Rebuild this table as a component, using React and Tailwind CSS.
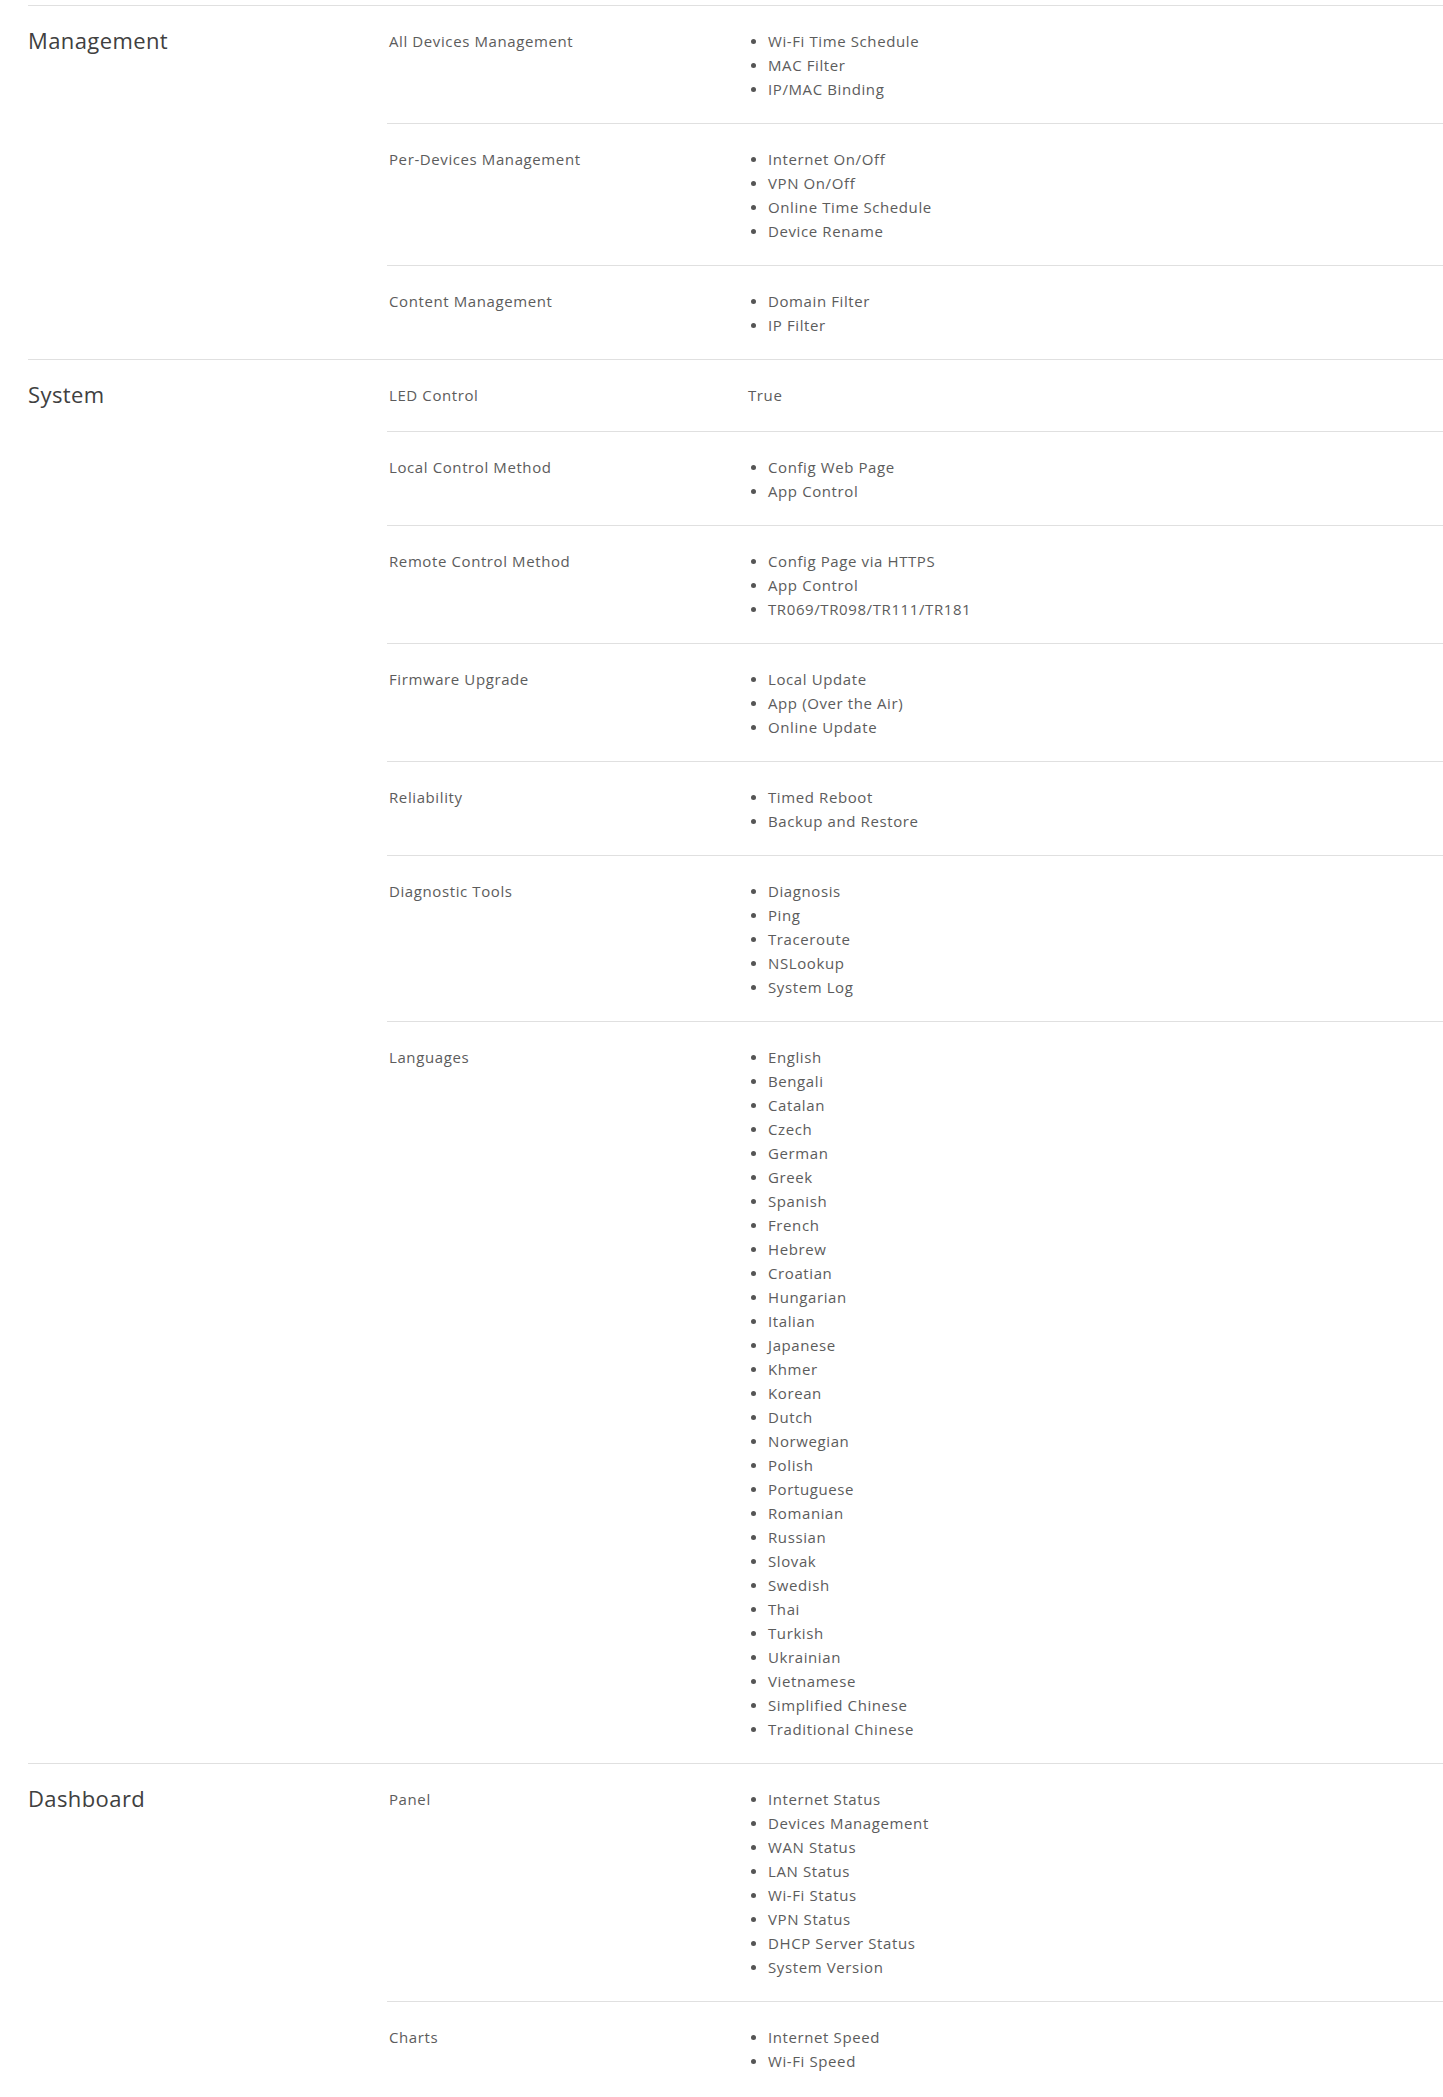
import React from 'react';

const sections = [
  {
    title: 'Management',
    rows: [
      { label: 'All Devices Management', items: ['Wi-Fi Time Schedule', 'MAC Filter', 'IP/MAC Binding'] },
      { label: 'Per-Devices Management', items: ['Internet On/Off', 'VPN On/Off', 'Online Time Schedule', 'Device Rename'] },
      { label: 'Content Management', items: ['Domain Filter', 'IP Filter'] },
    ],
  },
  {
    title: 'System',
    rows: [
      { label: 'LED Control', value: 'True' },
      { label: 'Local Control Method', items: ['Config Web Page', 'App Control'] },
      { label: 'Remote Control Method', items: ['Config Page via HTTPS', 'App Control', 'TR069/TR098/TR111/TR181'] },
      { label: 'Firmware Upgrade', items: ['Local Update', 'App (Over the Air)', 'Online Update'] },
      { label: 'Reliability', items: ['Timed Reboot', 'Backup and Restore'] },
      { label: 'Diagnostic Tools', items: ['Diagnosis', 'Ping', 'Traceroute', 'NSLookup', 'System Log'] },
      {
        label: 'Languages',
        items: [
          'English', 'Bengali', 'Catalan', 'Czech', 'German', 'Greek', 'Spanish', 'French', 'Hebrew',
          'Croatian', 'Hungarian', 'Italian', 'Japanese', 'Khmer', 'Korean', 'Dutch', 'Norwegian',
          'Polish', 'Portuguese', 'Romanian', 'Russian', 'Slovak', 'Swedish', 'Thai', 'Turkish',
          'Ukrainian', 'Vietnamese', 'Simplified Chinese', 'Traditional Chinese',
        ],
      },
    ],
  },
  {
    title: 'Dashboard',
    rows: [
      {
        label: 'Panel',
        items: ['Internet Status', 'Devices Management', 'WAN Status', 'LAN Status', 'Wi-Fi Status', 'VPN Status', 'DHCP Server Status', 'System Version'],
      },
      { label: 'Charts', items: ['Internet Speed', 'Wi-Fi Speed'] },
    ],
  },
];

function SpecRow({ row, last }) {
  return (
    <div
      className={
        'grid grid-cols-[361px_1fr] pt-[23px] ' +
        (row.value ? 'pb-[24px] ' : 'pb-[22px] ') +
        (last ? '' : 'border-b border-[#e0e0e0]')
      }
    >
      <div className="pl-[2px] leading-[24px]">{row.label}</div>
      {row.value ? (
        <div className="leading-[24px]">{row.value}</div>
      ) : (
        <ul>
          {row.items.map((item, i) => (
            <li key={i} className="flex items-center leading-[24px]">
              <span className="w-[5px] h-[5px] rounded-full bg-[#555] ml-[3px] mr-[12px] shrink-0" />
              <span>{item}</span>
            </li>
          ))}
        </ul>
      )}
    </div>
  );
}

export default function App() {
  return (
    <div className="bg-white min-h-screen pt-[5px] pl-[28px] font-['Open_Sans',sans-serif] text-[15px] text-[#5c5c5c] tracking-[0.6px]">
      {sections.map(section => (
        <section key={section.title} className="flex border-t border-[#e0e0e0]">
          <h2 className="w-[359px] shrink-0 pt-[19px] text-[22px] leading-[30px] font-medium text-[#404040] tracking-[0.4px]">
            {section.title}
          </h2>
          <div className="flex-1">
            {section.rows.map((row, i) => (
              <SpecRow key={row.label} row={row} last={i === section.rows.length - 1} />
            ))}
          </div>
        </section>
      ))}
    </div>
  );
}
